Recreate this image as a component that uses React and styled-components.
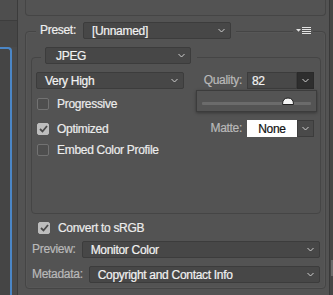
import React from 'react';
import styled, { createGlobalStyle } from 'styled-components';

const Global = createGlobalStyle`
  html, body { margin: 0; padding: 0; background: #535353; }
  body { font-family: "Liberation Sans", Arial, sans-serif; font-size: 12px; }
  * { box-sizing: border-box; }
`;

const Root = styled.div`
  display: flex;
  width: 333px;
  height: 295px;
  overflow: hidden;
  background: #535353;
  color: #ececec;
  letter-spacing: -0.3px;
  -webkit-text-stroke: 0.2px;
`;

const PreviewPane = styled.div`
  width: 18px;
  flex: none;
  display: flex;
  flex-direction: column;
  border-right: 1px solid #3b3b3b;
  background: #4a4a4a;
`;
const PaneTabs = styled.div`
  height: 21px;
  flex: none;
  background: #4e4e4e;
  border-bottom: 1px solid #3d3d3d;
`;
const PaneGap = styled.div`
  height: 26px;
  flex: none;
  background: #474747;
`;
const PaneFrame = styled.div`
  width: 12px;
  flex: 1;
  border-top: 2px solid #4b86c6;
  border-right: 2px solid #4b86c6;
  border-top-right-radius: 4px;
  background: #454545;
`;

const Settings = styled.div`
  flex: 1;
  display: flex;
  flex-direction: column;
  padding: 0 3px 0 7px;
`;
const TopBox = styled.div`
  height: 16px;
  flex: none;
  border: 1px solid #454545;
  border-top: none;
  border-radius: 0 0 4px 4px;
`;
const GroupBox = styled.div`
  margin-top: 15px;
  border: 1px solid #454545;
  border-radius: 4px;
  display: flex;
  flex-direction: column;
  box-shadow: inset 0 0 0 1px rgba(255,255,255,0.025);
`;
const Header = styled.div`
  display: flex;
  align-items: center;
  height: 17px;
  margin-top: -10px;
  padding: 0 12px 0 10px;
`;
const Mask = styled.div`
  display: flex;
  align-items: center;
  gap: 7px;
  background: #535353;
  padding: ${p => p.$pad || '0 5px 0 4px'};
`;
const Fill = styled.div`flex: 1;`;
const Label = styled.span`
  color: ${p => (p.$bright ? '#efefef' : '#b9b9b9')};
  white-space: nowrap;
  line-height: 17px;
`;

const Select = styled.div`
  display: flex;
  align-items: center;
  height: 17px;
  width: ${p => p.$w || 'auto'};
  flex: ${p => (p.$grow ? 1 : 'none')};
  padding: 0 5px 0 8px;
  background: #474747;
  border: 1px solid #3c3c3c;
  border-radius: 2px;
  color: #f2f2f2;
  white-space: nowrap;
`;
const SelectText = styled.span`flex: 1; padding-left: ${p => p.$indent || 0}px;`;

const Chevron = ({ color = '#cfcfcf' }) => (
  <svg width="7" height="5" viewBox="0 0 7 5" style={{ flex: 'none' }}>
    <polyline points="0.5,1 3.5,4 6.5,1" fill="none" stroke={color} strokeWidth="1" />
  </svg>
);

const FormatBox = styled.div`
  position: relative;
  margin: 18px 4px 0 5px;
  height: 157px;
  border: 1px solid #454545;
  border-radius: 4px;
  padding: 0 6px 0 4px;
  display: flex;
  flex-direction: column;
`;
const InnerHeader = styled.div`
  display: flex;
  height: 17px;
  margin-top: -11px;
  padding-left: 5px;
`;
const Row = styled.div`
  display: flex;
  align-items: center;
  height: ${p => p.$h || 17}px;
  margin-top: ${p => p.$mt || 0}px;
  justify-content: space-between;
`;
const FieldGroup = styled.div`
  display: flex;
  align-items: center;
  gap: 5px;
`;
const Field = styled.div`
  display: flex;
  height: 17px;
`;
const FieldInput = styled.div`
  width: 50px;
  height: 17px;
  padding-left: ${p => (p.$white ? 0 : 4)}px;
  text-align: ${p => (p.$white ? 'center' : 'left')};
  line-height: 16px;
  background: ${p => (p.$white ? '#ffffff' : '#484848')};
  color: ${p => (p.$white ? '#111' : '#f2f2f2')};
  border: 1px solid ${p => (p.$white ? '#ffffff' : '#3c3c3c')};
`;
const FieldButton = styled.div`
  width: 17px;
  height: 17px;
  display: flex;
  align-items: center;
  justify-content: center;
  background: ${p => (p.$dark ? '#2e2e2e' : '#4a4a4a')};
  border: 1px solid ${p => (p.$dark ? '#2a2a2a' : '#3c3c3c')};
`;

const CheckRow = styled.label`
  display: flex;
  align-items: center;
  gap: 8px;
  padding-left: 1px;
  color: #ececec;
  white-space: nowrap;
`;
const Box = styled.span`
  width: 12px;
  height: 12px;
  flex: none;
  border-radius: 2px;
  display: flex;
  align-items: center;
  justify-content: center;
  background: ${p => (p.$on ? '#bdbdbd' : '#4e4e4e')};
  border: 1px solid ${p => (p.$on ? '#bdbdbd' : '#727272')};
`;
const Check = ({ on, children }) => (
  <CheckRow>
    <Box $on={on}>
      {on && (
        <svg width="9" height="8" viewBox="0 0 9 8">
          <polyline points="1,4 3.5,6.5 8,1" fill="none" stroke="#4a4a4a" strokeWidth="1.8" />
        </svg>
      )}
    </Box>
    {children}
  </CheckRow>
);

const SliderPopup = styled.div`
  position: absolute;
  left: 164px;
  top: 32px;
  width: 121px;
  height: 22px;
  background: #545454;
  border: 1px solid #3c3c3c;
  box-shadow: 0 1px 3px rgba(0,0,0,0.35);
  display: flex;
  align-items: center;
  padding: 0 5px;
`;
const Track = styled.div`
  position: relative;
  flex: 1;
  height: 3px;
  margin-top: 4px;
  background: #6b6b6b;
  border-radius: 1px;
`;
const Thumb = styled.svg`
  position: absolute;
  left: 80px;
  top: -5px;
`;

const Bottom = styled.div`
  display: flex;
  flex-direction: column;
  padding: 0 5px 5px 6px;
`;
const BottomRow = styled.div`
  display: flex;
  align-items: center;
  gap: 6px;
  height: ${p => p.$h || 17}px;
  margin-top: ${p => p.$mt || 0}px;
  padding-left: ${p => p.$pl || 0}px;
`;

const Strip = styled.div`
  width: 4px;
  flex: none;
  border-left: 1px solid #393939;
  background: #464646;
  display: flex;
  flex-direction: column;
  align-items: flex-end;
`;
const StripThumb = styled.div`
  width: 2px;
  height: 16px;
  margin-top: 260px;
  background: #6c6c6c;
`;

export default function App() {
  return (
    <Root>
      <Global />
      <PreviewPane>
        <PaneTabs />
        <PaneGap />
        <PaneFrame />
      </PreviewPane>
      <Settings>
        <TopBox />
        <GroupBox>
          <Header>
            <Mask>
              <Label $bright>Preset:</Label>
              <Select $w="148px">
                <SelectText>[Unnamed]</SelectText>
                <Chevron />
              </Select>
            </Mask>
            <Fill />
            <Mask $pad="0 2px 0 3px">
              <svg width="15" height="8" viewBox="0 0 15 8">
                <polygon points="0,2 5,2 2.5,4.8" fill="#e2e2e2" />
                <g stroke="#e2e2e2" strokeWidth="1">
                  <line x1="6" y1="0.5" x2="15" y2="0.5" />
                  <line x1="6" y1="2.5" x2="15" y2="2.5" />
                  <line x1="6" y1="4.5" x2="15" y2="4.5" />
                  <line x1="6" y1="6.5" x2="15" y2="6.5" />
                </g>
              </svg>
            </Mask>
          </Header>

          <FormatBox>
            <InnerHeader>
              <Mask $pad="0 6px 0 4px">
                <Select $w="146px">
                  <SelectText $indent={2}>JPEG</SelectText>
                  <Chevron />
                </Select>
              </Mask>
            </InnerHeader>
            <Row $mt={8}>
              <Select $w="148px">
                <SelectText>Very High</SelectText>
                <Chevron />
              </Select>
              <FieldGroup>
                <Label>Quality:</Label>
                <Field>
                  <FieldInput>82</FieldInput>
                  <FieldButton $dark>
                    <Chevron />
                  </FieldButton>
                </Field>
              </FieldGroup>
            </Row>
            <Row $mt={7} $h={16}>
              <Check>Progressive</Check>
            </Row>
            <Row $mt={8}>
              <Check on>Optimized</Check>
              <FieldGroup>
                <Label>Matte:</Label>
                <Field>
                  <FieldInput $white>None</FieldInput>
                  <FieldButton>
                    <Chevron />
                  </FieldButton>
                </Field>
              </FieldGroup>
            </Row>
            <Row $mt={5} $h={16}>
              <Check>Embed Color Profile</Check>
            </Row>
            <SliderPopup>
              <Track>
                <Thumb width="12" height="8" viewBox="0 0 12 8">
                  <path d="M0.5 7.5 Q0.5 1 6 1 Q11.5 1 11.5 7.5 Z" fill="#f4f4f4" stroke="#222" strokeWidth="1" />
                </Thumb>
              </Track>
            </SliderPopup>
          </FormatBox>

          <Bottom>
            <BottomRow $mt={6} $h={16} $pl={5}>
              <Check on>Convert to sRGB</Check>
            </BottomRow>
            <BottomRow $mt={5}>
              <Label>Preview:</Label>
              <Select $grow>
                <SelectText>Monitor Color</SelectText>
                <Chevron />
              </Select>
            </BottomRow>
            <BottomRow $mt={8}>
              <Label>Metadata:</Label>
              <Select $grow>
                <SelectText>Copyright and Contact Info</SelectText>
                <Chevron />
              </Select>
            </BottomRow>
          </Bottom>
        </GroupBox>
      </Settings>
      <Strip>
        <StripThumb />
      </Strip>
    </Root>
  );
}
